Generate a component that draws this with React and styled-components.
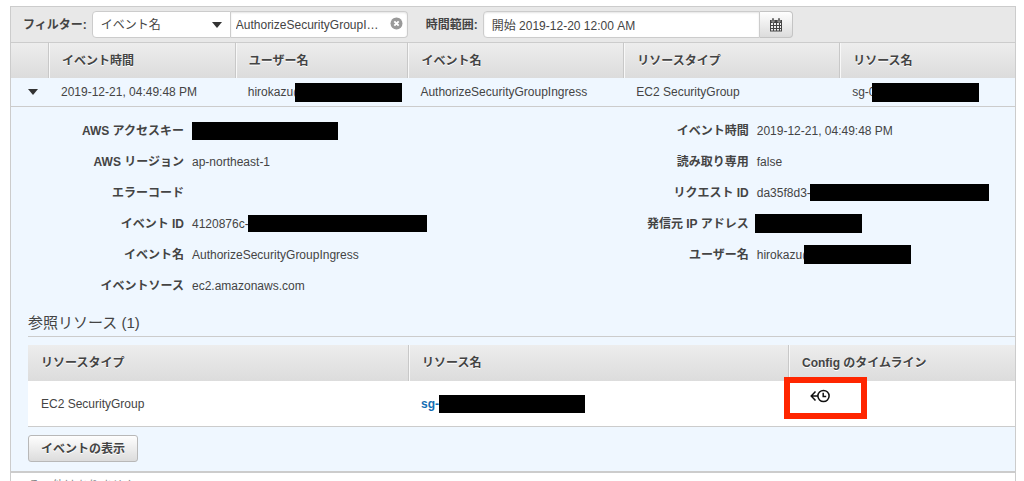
import { useState } from "react";
import styled, { createGlobalStyle, css } from "styled-components";

const GlobalStyle = createGlobalStyle`
  * {
    box-sizing: border-box;
  }
  body {
    margin: 0;
    background: #fff;
    color: #444;
    font: 12px/16px "Liberation Sans", "Noto Sans CJK JP", sans-serif;
  }
  button, input, select {
    margin: 0;
    font: inherit;
    color: inherit;
  }
`;

const Page = styled.main`
  height: 100vh;
  padding: 6px 8px 0 10px;
  overflow: hidden;
`;

const Panel = styled.section`
  border: 1px solid #ccc;
`;

const FilterBar = styled.form`
  display: flex;
  align-items: center;
  padding: 4px 12px;
  background: #e8e8e8;
`;

const FilterLabel = styled.label`
  margin-right: 5px;
  font-weight: bold;
`;

const Field = styled.div`
  position: relative;
  display: flex;
  flex: 0 1 ${({ $width }) => $width}px;
  margin-right: ${({ $gap }) => $gap || 0}px;
`;

const fieldBox = css`
  width: 100%;
  min-width: 0;
  height: 27px;
  border: 1px solid #ccc;
  background: #fff;
  outline: none;
`;

const Select = styled.select`
  ${fieldBox}
  appearance: none;
  padding: 0 24px 0 8px;
  border-radius: 4px 0 0 4px;
`;

const TextInput = styled.input`
  ${fieldBox}
  padding: 0 ${({ $clearable }) => ($clearable ? 26 : 8)}px 0
    ${({ $clearable }) => ($clearable ? 5 : 8)}px;
  border-left-width: ${({ $clearable }) => ($clearable ? 0 : 1)}px;
  border-radius: ${({ $clearable }) => ($clearable ? "0 4px 4px 0" : "4px 0 0 4px")};
  box-shadow: inset 0 1px 2px #e4e4e4;
  text-overflow: ellipsis;
`;

const SelectCaret = styled.svg`
  position: absolute;
  top: 11px;
  right: 9px;
  pointer-events: none;
`;

const ClearButton = styled.button`
  position: absolute;
  top: 6px;
  right: 5px;
  display: flex;
  padding: 0;
  border: 0;
  background: none;
`;

const raised = css`
  border: 1px solid #b8b8b8;
  background: linear-gradient(#fefefe, #dcdcdc);
  cursor: pointer;
`;

const CalendarButton = styled.button`
  ${raised}
  display: flex;
  align-items: center;
  justify-content: center;
  width: 33px;
  height: 27px;
  padding: 0;
  border-color: #c4c4c4;
  border-left: 0;
  border-radius: 0 4px 4px 0;
`;

const Table = styled.table`
  width: 100%;
  table-layout: fixed;
  border-spacing: 0;
`;

const Col = styled.col`
  width: ${({ $width }) => $width};
`;

const HeaderCell = styled.th`
  height: 36px;
  padding: 0 13px;
  border-top: ${({ $nested }) => ($nested ? 0 : 1)}px solid #ccc;
  background: linear-gradient(#ededed, #dcdcdc);
  text-align: left;
  text-shadow: 0 1px 0 #fff;
  white-space: nowrap;

  & + & {
    border-left: 1px solid #c8c8c8;
    box-shadow: inset 1px 0 #f8f8f8;
  }
`;

const Cell = styled.td`
  height: ${({ $nested }) => ($nested ? 46 : 29)}px;
  padding: 0 13px;
  border-bottom: 1px solid #ccc;
  background: ${({ $nested }) => ($nested ? "#fff" : "#eff7ff")};
  white-space: nowrap;
`;

const TimelineCell = styled(Cell)`
  position: relative;
  padding-top: 8px;
  padding-left: 22px;
  vertical-align: top;
`;

const ToggleButton = styled.button`
  display: flex;
  padding: 0 4px;
  border: 0;
  background: none;
  cursor: pointer;
`;

const Value = styled.span`
  display: flex;
  align-items: center;
`;

const Redacted = styled.span`
  flex: none;
  width: ${({ $width }) => $width}px;
  height: ${({ $height }) => $height || 18}px;
  margin-left: -${({ $overlap }) => $overlap || 0}px;
  background: #000;
  z-index: 1;
`;

const DetailCell = styled.td`
  padding: 8px 0 9px;
  border-bottom: 2px solid #ccc;
  background: #eff7ff;
`;

const DetailColumns = styled.div`
  display: grid;
  grid-template-columns: 9fr 7fr;
  align-items: start;
`;

const DetailList = styled.dl`
  display: grid;
  grid-template-columns: 173px 1fr;
  grid-auto-rows: 31px;
  align-items: center;
  column-gap: 8px;
  margin: 0;
  white-space: nowrap;

  dt {
    font-weight: bold;
    text-align: right;
  }
  dd {
    margin: 0;
  }
`;

const Resources = styled.section`
  margin-left: 17px;
`;

const ResourcesTitle = styled.h2`
  margin: 12px 0 8px;
  padding-bottom: 3px;
  border-bottom: 1px solid #ccc;
  font-size: 15px;
  font-weight: normal;
  line-height: 20px;
`;

const ResourceLink = styled.a`
  color: #146eb4;
  font-weight: bold;
  text-decoration: none;
`;

const TimelineLink = styled.a`
  display: inline-flex;
  color: #111;
`;

const Highlight = styled.span`
  position: absolute;
  top: -4px;
  left: -4px;
  width: 83px;
  height: 42px;
  border: 6px solid #ff2600;
  pointer-events: none;
`;

const ViewEventButton = styled.button`
  ${raised}
  height: 27px;
  margin-top: 8px;
  padding: 0 12px;
  border-radius: 3px;
  font-weight: bold;
  text-shadow: 0 1px 0 #fff;
`;

const Footer = styled.p`
  margin: 0;
  padding: 5px 17px;
  color: #888;
`;

const Triangle = () => (
  <svg width="10" height="6" viewBox="0 0 10 6" aria-hidden="true">
    <path d="M0 0h10L5 6z" fill="#333" />
  </svg>
);

const ClearIcon = () => (
  <svg width="13" height="13" viewBox="0 0 13 13" aria-hidden="true">
    <circle cx="6.5" cy="6.5" r="6" fill="#999" />
    <path d="m4.3 4.3 4.4 4.4m0-4.4L4.3 8.7" stroke="#fff" strokeWidth="1.9" />
  </svg>
);

const CalendarIcon = () => (
  <svg width="14" height="14" viewBox="0 0 14 14" aria-hidden="true">
    <path d="M1 2h12v11.5H1z" fill="#444" />
    <path d="M3 0h2v4H3zM9 0h2v4H9z" fill="#444" stroke="#eee" strokeWidth=".5" />
    <path
      d="M2 5h2v2H2zm3 0h2v2H5zm3 0h2v2H8zm3 0h1v2h-1zM2 8h2v2H2zm3 0h2v2H5zm3 0h2v2H8zm3 0h1v2h-1zM2 11h2v1.5H2zm3 0h2v1.5H5zm3 0h2v1.5H8zm3 0h1v1.5h-1z"
      fill="#eee"
    />
  </svg>
);

const TimelineIcon = () => (
  <svg
    width="20"
    height="14"
    viewBox="0 0 20 14"
    fill="none"
    stroke="currentColor"
    strokeWidth="1.5"
    aria-hidden="true"
  >
    <circle cx="13.5" cy="7" r="5.6" />
    <path d="M13.2 3.8v3.7h3M8 7H1.2M5.5 2.4 1.2 7l4.3 4.6" />
  </svg>
);

const leftDetails = [
  { label: "AWS アクセスキー", bar: 146 },
  { label: "AWS リージョン", text: "ap-northeast-1" },
  { label: "エラーコード" },
  { label: "イベント ID", text: "4120876c-", bar: 179, height: 17, overlap: 1 },
  { label: "イベント名", text: "AuthorizeSecurityGroupIngress" },
  { label: "イベントソース", text: "ec2.amazonaws.com" },
];

const rightDetails = [
  { label: "イベント時間", text: "2019-12-21, 04:49:48 PM" },
  { label: "読み取り専用", text: "false" },
  { label: "リクエスト ID", text: "da35f8d3-", bar: 179, height: 17, overlap: 1 },
  { label: "発信元 IP アドレス", bar: 107, height: 19, overlap: 2 },
  { label: "ユーザー名", text: "hirokazu@", bar: 107, height: 19, overlap: 10 },
];

const Details = ({ items }) => (
  <DetailList>
    {items.map(({ label, text, bar, height, overlap }) => [
      <dt key={label}>{label}</dt>,
      <dd key={`${label}-value`}>
        <Value>
          {text}
          {bar && <Redacted $width={bar} $height={height} $overlap={overlap} />}
        </Value>
      </dd>,
    ])}
  </DetailList>
);

const ReferencedResources = () => (
  <Resources>
    <ResourcesTitle>参照リソース (1)</ResourcesTitle>
    <Table>
      <colgroup>
        <Col $width="38.5%" />
        <Col $width="38.5%" />
        <Col />
      </colgroup>
      <thead>
        <tr>
          <HeaderCell $nested>リソースタイプ</HeaderCell>
          <HeaderCell $nested>リソース名</HeaderCell>
          <HeaderCell $nested>Config のタイムライン</HeaderCell>
        </tr>
      </thead>
      <tbody>
        <tr>
          <Cell $nested>EC2 SecurityGroup</Cell>
          <Cell $nested>
            <Value>
              <ResourceLink href="#resource">sg-</ResourceLink>
              <Redacted $width={146} />
            </Value>
          </Cell>
          <TimelineCell $nested>
            <TimelineLink href="#timeline" aria-label="Config のタイムライン">
              <TimelineIcon />
            </TimelineLink>
            <Highlight />
          </TimelineCell>
        </tr>
      </tbody>
    </Table>
    <ViewEventButton type="button">イベントの表示</ViewEventButton>
  </Resources>
);

const App = () => {
  const [isOpen, setIsOpen] = useState(true);
  const [filter, setFilter] = useState("AuthorizeSecurityGroupIngress");
  const [start, setStart] = useState("開始 2019-12-20 12:00 AM");

  return (
    <Page>
      <GlobalStyle />
      <Panel>
        <FilterBar onSubmit={(e) => e.preventDefault()}>
          <FilterLabel htmlFor="attribute">フィルター:</FilterLabel>
          <Field $width={139}>
            <Select id="attribute" defaultValue="name">
              <option value="name">イベント名</option>
              <option value="user">ユーザー名</option>
              <option value="type">リソースタイプ</option>
            </Select>
            <SelectCaret width="10" height="6" viewBox="0 0 10 6">
              <path d="M0 0h10L5 6z" fill="#333" />
            </SelectCaret>
          </Field>
          <Field $width={177} $gap={18}>
            <TextInput
              $clearable
              aria-label="イベント名"
              value={filter}
              onChange={(e) => setFilter(e.target.value)}
            />
            <ClearButton
              type="button"
              aria-label="クリア"
              onClick={() => setFilter("")}
            >
              <ClearIcon />
            </ClearButton>
          </Field>
          <FilterLabel htmlFor="range">時間範囲:</FilterLabel>
          <Field $width={277}>
            <TextInput
              id="range"
              value={start}
              onChange={(e) => setStart(e.target.value)}
            />
          </Field>
          <CalendarButton type="button" aria-label="カレンダー">
            <CalendarIcon />
          </CalendarButton>
        </FilterBar>

        <Table>
          <colgroup>
            <Col $width="37px" />
            <Col $width="18.6%" />
            <Col $width="17.2%" />
            <Col $width="21.5%" />
            <Col $width="21.5%" />
            <Col />
          </colgroup>
          <thead>
            <tr>
              <HeaderCell />
              <HeaderCell>イベント時間</HeaderCell>
              <HeaderCell>ユーザー名</HeaderCell>
              <HeaderCell>イベント名</HeaderCell>
              <HeaderCell>リソースタイプ</HeaderCell>
              <HeaderCell>リソース名</HeaderCell>
            </tr>
          </thead>
          <tbody>
            <tr>
              <Cell>
                <ToggleButton
                  type="button"
                  aria-label="詳細"
                  aria-expanded={isOpen}
                  onClick={() => setIsOpen(!isOpen)}
                >
                  <Triangle />
                </ToggleButton>
              </Cell>
              <Cell>2019-12-21, 04:49:48 PM</Cell>
              <Cell>
                <Value>
                  hirokazu@
                  <Redacted $width={107} $height={19} $overlap={10} />
                </Value>
              </Cell>
              <Cell>AuthorizeSecurityGroupIngress</Cell>
              <Cell>EC2 SecurityGroup</Cell>
              <Cell>
                <Value>
                  sg-0
                  <Redacted $width={107} $height={19} $overlap={3} />
                </Value>
              </Cell>
            </tr>
            {isOpen && (
              <tr>
                <DetailCell colSpan={6}>
                  <DetailColumns>
                    <Details items={leftDetails} />
                    <Details items={rightDetails} />
                  </DetailColumns>
                  <ReferencedResources />
                </DetailCell>
              </tr>
            )}
          </tbody>
        </Table>
        <Footer>その他はありません</Footer>
      </Panel>
    </Page>
  );
};

export default App;
